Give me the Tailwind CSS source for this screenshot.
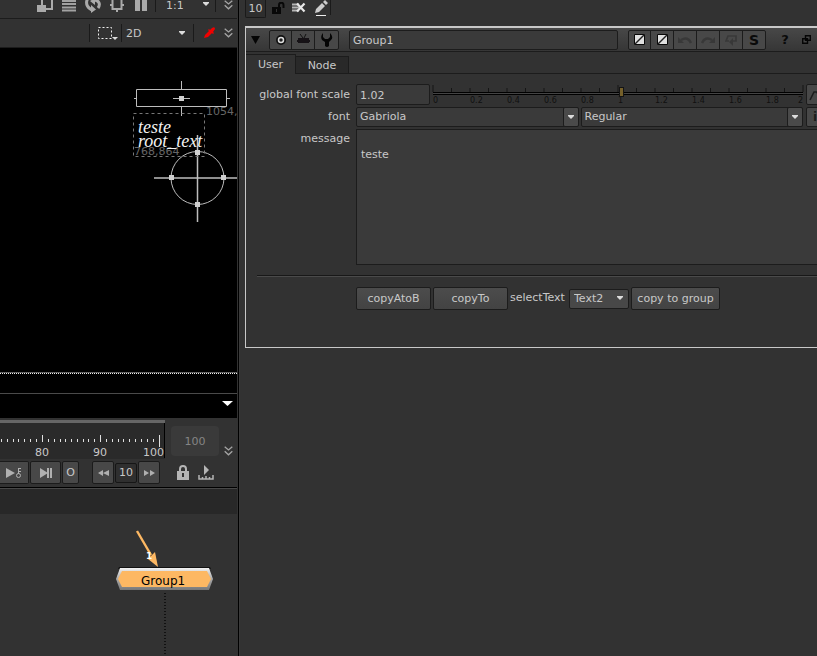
<!DOCTYPE html>
<html lang="en">
<head>
<meta charset="utf-8">
<meta name="viewport" content="width=device-width, initial-scale=1">
<title>Group1</title>
<script src="https://cdn.jsdelivr.net/npm/@tailwindcss/browser@4"></script>
</head>
<body class="flex h-screen overflow-hidden bg-[#323232] font-['DejaVu_Sans',Verdana,sans-serif] text-[11px] leading-4 text-[#c8c8c8]">
<svg class="hidden">
  <symbol id="chevrons" viewBox="0 0 9 10"><path d="M.7.8 4.5 4 8.3.8M.7 5.3 4.5 8.8 8.3 5.3" fill="none" stroke="#a5a5a5" stroke-width="1.3"/></symbol>
  <symbol id="caret" viewBox="0 0 6 4"><path d="M0 0h6v1L3 4 0 1z" fill="#dcdcdc"/></symbol>
</svg>

<!-- Viewer, timeline and node graph -->
<div class="flex w-[239px] shrink-0 flex-col border-r border-black">
  <div class="mr-px flex h-[19px] items-center overflow-hidden border-b border-[#1c1c1c] pl-[37px]">
    <div class="flex h-full gap-2">
      <button aria-label="Wipe" class="h-4 w-4"><svg width="16" height="16"><path d="M5 0v6M5 9h10V0" fill="none" stroke="#aaa" stroke-width="2"/><path d="M0 5h9v7H0z" fill="#aaa"/></svg></button>
      <button aria-label="Scanlines" class="h-4 w-4"><svg width="16" height="16"><path d="M1 1h14M1 4h14M1 7.500h14M1 10.500h14" stroke="#a2a2a2" stroke-width="2"/></svg></button>
      <button aria-label="Refresh" class="h-4 w-4"><svg width="16" height="16"><path d="M2.500-1C0 4 3 9 8 10M13 8C16 4 13.500 0 9 0" fill="none" stroke="#aaa" stroke-width="3"/><path d="m6 5 5 4.500-5 3.500zM10 5 5 1l5-3z" fill="#aaa"/></svg></button>
      <button aria-label="Region" class="h-4 w-4"><svg width="16" height="16"><path d="M3.500-1v10h9V-1M1 5h3M12 5h3M8 9v3" fill="none" stroke="#aaa" stroke-width="2"/></svg></button>
      <button aria-label="Pause" class="h-4 w-4"><svg width="16" height="16"><path d="M2 0h5v11H2zM9 0h5v11H9z" fill="#aaa"/></svg></button>
    </div>
    <div class="ml-1.5 h-3 w-px self-start bg-[#1a1a1a]"></div>
    <div class="relative w-[59px] self-start">
      <select aria-label="Zoom" class="-mt-[2px] block w-full appearance-none pl-2.5"><option>1:1</option></select>
      <svg class="pointer-events-none absolute right-1.5 top-[2px] h-1 w-1.5"><use href="#caret"/></svg>
    </div>
    <div class="h-3 w-px self-start bg-[#1a1a1a]"></div>
    <button aria-label="More" class="ml-2 self-start"><svg class="h-2.5 w-[9px]"><use href="#chevrons"/></svg></button>
  </div>
  <div class="mr-px flex h-[29px] items-center border-b border-[#1c1c1c] pl-[89px]">
    <div class="h-[18px] w-px bg-[#1a1a1a]"></div>
    <button aria-label="Selection" class="ml-2 w-[23px]"><svg width="20" height="14"><rect x=".5" y="1.500" width="13" height="11" fill="none" stroke="#eee" stroke-dasharray="2 2"/><path d="M14 11h6l-3 3z" fill="#ddd"/></svg></button>
    <div class="h-[18px] w-px bg-[#1a1a1a]"></div>
    <div class="relative w-[71px]">
      <select aria-label="View mode" class="block w-full appearance-none pl-1 pt-px"><option>2D</option></select>
      <svg class="pointer-events-none absolute right-2 top-1.5 h-1 w-1.5"><use href="#caret"/></svg>
    </div>
    <div class="h-[18px] w-px bg-[#1a1a1a]"></div>
    <button aria-label="Pick colour" class="ml-2.5"><svg width="12" height="12"><path d="m0 11 1-3 4-4-1-1 1-1 1 1 2-2q3-2 3 1L9 5l1 1-1 1-1-1-4 4z" fill="#f00000"/></svg></button>
    <button aria-label="More" class="ml-2"><svg class="h-2.5 w-[9px]"><use href="#chevrons"/></svg></button>
  </div>

  <div class="relative mr-px h-[345px] shrink-0 overflow-hidden bg-black">
    <svg class="absolute inset-0 h-full w-full" font-family="DejaVu Sans, sans-serif">
      <g fill="none" stroke="#bdbdbd">
        <path d="M136.500 41.500h90v17h-90zM181.500 33v9M181.500 58v10M173 50.500h17M134 50.500h3M227 50.500h3"/>
        <circle cx="197.500" cy="130" r="26.500"/>
        <path d="M197.500 87v87M154 130h84" stroke-width="1.500"/>
        <path d="M133.500 65.500h71v43h-71z" stroke="#777" stroke-dasharray="3 3"/>
      </g>
      <g fill="#d0d0d0"><path d="M179 48h5v5h-5zM195 102h5v5h-5zM195 154h5v5h-5zM169 127h5v5h-5zM221 127h5v5h-5z"/></g>
      <g fill="#666" font-size="11"><text x="206" y="67">1054,</text><text x="134" y="107">768,864</text></g>
      <g fill="#f2f2f2" font-family="Liberation Serif, serif" font-style="italic" font-size="18"><text x="138" y="85">teste</text><text x="138" y="99">root_text</text></g>
      <path d="M0 325.500h238" stroke="#f0f0f0" stroke-dasharray="1 1"/><path d="M0 324.500h238" stroke="#666"/>
    </svg>
  </div>
  <div class="mr-px flex h-[25px] shrink-0 items-start justify-end border-t border-[#4a4a4a] bg-black pr-1 pt-[7px]">
    <button aria-label="Show viewer options" class="leading-none"><svg width="11" height="6"><path d="M0 0h11L5.500 5z" fill="#fff"/></svg></button>
  </div>

  <div class="flex h-[41px] shrink-0 pt-[2px]">
    <div class="w-[165px] bg-[#2a2a2a]">
      <div class="h-[3px] bg-[#666]"></div>
      <svg class="block h-[35px] w-full border-r border-black" fill="#c8c8c8" font-size="11">
        <path d="M1.500 16v3M7.500 16v3M13.500 16v3M18.500 16v3M24.500 16v3M30.500 16v3M36.500 16v3M48.500 16v3M54.500 16v3M60.500 16v3M65.500 16v3M71.500 16v3M77.500 16v3M83.500 16v3M88.500 16v3M94.500 16v3M106.500 16v3M112.500 16v3M118.500 16v3M123.500 16v3M129.500 16v3M135.500 16v3M141.500 16v3M147.500 16v3M153.500 16v3M42.500 12v7M100.500 12v7M159.500 12v12" stroke="#e0e0e0"/>
        <text x="35" y="33">80</text><text x="93" y="33">90</text><text x="143" y="33">100</text>
      </svg>
    </div>
    <input aria-label="Last frame" value="100" class="ml-1.5 mt-1.5 h-[30px] w-12 rounded-sm bg-[#3a3a3a] text-center text-[#858585]">
    <button aria-label="More" class="ml-[5px] mt-[26px] h-2.5"><svg class="h-2.5 w-[9px]"><use href="#chevrons"/></svg></button>
  </div>
  <div class="flex h-[27px] shrink-0 items-center gap-px">
    <button aria-label="Next keyframe" class="flex h-[23px] w-[29px] items-center justify-center rounded-r-xs border border-l-0 border-[#1b1b1b] bg-[#484848]"><svg width="16" height="12" fill="#b0b0b0"><path d="m0 1 9 5-9 5z"/><circle cx="12.500" cy="8.500" r="2" fill="none" stroke="#b0b0b0"/><path d="M12 1h1v6h-1zM13 1h2v1h-2zM13 4h2v1h-2z"/></svg></button>
    <button aria-label="Last frame" class="flex h-[23px] w-[31px] items-center justify-center rounded-xs border border-[#1b1b1b] bg-[#484848]"><svg width="13" height="12" fill="#b0b0b0"><path d="m1 1 8 5-8 5zM8 1h2v10H8zM11 1h2v10h-2z"/></svg></button>
    <button class="h-[23px] w-[17px] rounded-xs border border-[#1b1b1b] bg-[#484848]">O</button>
    <button aria-label="Skip back" class="ml-3 flex h-[23px] w-[22px] items-center justify-center rounded-xs border border-[#1b1b1b] bg-[#484848]"><svg width="11" height="6" fill="#b0b0b0"><path d="M5 0v6L0 3zM11 0v6L5 3z"/></svg></button>
    <input aria-label="Skip frames" value="10" class="h-5 w-[22px] rounded-xs border border-[#161616] bg-[#2f2f2f] text-center">
    <button aria-label="Skip forward" class="flex h-[23px] w-[22px] items-center justify-center rounded-xs border border-[#1b1b1b] bg-[#484848]"><svg width="11" height="6" fill="#b0b0b0"><path d="M0 0v6l5-3zM6 0v6l5-3z"/></svg></button>
    <button aria-label="Lock range" class="ml-4"><svg width="12" height="15"><path d="M3 7V4a3 3 0 0 1 6 0v3" fill="none" stroke="#b5b5b5" stroke-width="2"/><path d="M0 6h12v9H0z" fill="#b5b5b5"/><path d="M5 8h2v4H5z" fill="#333"/></svg></button>
    <button aria-label="Playback range" class="ml-2"><svg width="16" height="15"><path d="m6 0 5 5-5 5z" fill="#b5b5b5"/><path d="M1 10v4h14v-4M4.500 12v2M8 11v3M11.500 12v2" fill="none" stroke="#b5b5b5" stroke-width="1.500"/></svg></button>
  </div>
  <div class="mr-px mt-px h-[27px] shrink-0 border-t border-black bg-[#282828]"><div class="h-px bg-[#484848]"></div></div>
  <div class="relative flex-1 overflow-hidden">
    <svg class="absolute inset-0 h-full w-full" font-family="DejaVu Sans, sans-serif">
      <defs><linearGradient id="bevel" x2="0" y2="1"><stop offset="0" stop-color="#f2f2f2"/><stop offset=".5" stop-color="#aaa"/><stop offset="1" stop-color="#777"/></linearGradient></defs>
      <path d="M165 79v70" stroke="#111" stroke-width="2" stroke-dasharray="1 2"/>
      <path d="M119 53h91l1 2H118z" fill="#111"/>
      <path d="M120 54h89l4 11-4 11h-89l-4-11z" fill="url(#bevel)"/>
      <path d="M122 57h85l4 8-4 8h-85l-4-8z" fill="#fdb863"/>
      <text x="141" y="71" font-size="12" fill="#000">Group1</text>
      <path d="m137 17 14 24" stroke="#fdb863" stroke-width="2.400"/>
      <path d="m148 45 7-7 3 15z" fill="#fdb863"/>
      <text x="146" y="45" font-size="9" font-weight="bold" fill="#fff">1</text>
    </svg>
  </div>
</div>

<!-- Properties -->
<div class="flex min-w-0 flex-1 flex-col overflow-hidden border-l border-[#3a3a3a] pl-[5px]">
  <div class="flex h-[26px] shrink-0 items-start">
    <input aria-label="Maximum panels" value="10" class="h-[18px] w-[21px] rounded-b-xs border border-t-0 border-[#1a1a1a] bg-[#2e2e2e] text-center">
    <button aria-label="Unlock panels" class="ml-1.5 mt-[2px]"><svg width="14" height="13"><path d="M0 5h9v7H0z" fill="#080808"/><path d="M7 6V3a2.200 2.200 0 0 1 4.500 0v3" fill="none" stroke="#080808" stroke-width="2"/><path d="M4 7h1v3H4z" fill="#333"/></svg></button>
    <button aria-label="Clear panels" class="ml-1.5 mt-[2px]"><svg width="14" height="12"><path d="M0 2.500h7M0 5.500h7M0 8.500h7" stroke="#b5b5b5" stroke-width="2"/><path d="m5 1.500 7.500 8M12.500 1.500 5 9.500" stroke="#e8e8e8" stroke-width="2.200"/></svg></button>
    <button aria-label="Edit" class="ml-2"><svg width="14" height="16"><path d="m1 13 1-4 6-6 3 3-6 6zM9 2l2-2 3 3-2 2z" fill="#ccc"/><path d="M2 15.500h10" stroke="#eee"/></svg></button>
    <div class="ml-[2px] h-[15px] w-px bg-[#1a1a1a]"></div>
  </div>

  <section class="-mr-4 h-[322px] shrink-0 border border-t-2 border-[#c8c8c8]">
    <header class="flex h-6 items-center border-b border-[#1c1c1c] bg-linear-to-b from-[#484848] to-[#363636] pl-[5px] pr-5">
      <button aria-label="Collapse"><svg width="9" height="8"><path d="M0 0h9L4.500 8z" fill="#050505"/></svg></button>
      <div class="ml-[9px] flex h-5 divide-x divide-[#1c1c1c] overflow-hidden rounded-xs border border-[#1c1c1c] bg-[#484848]">
        <button aria-label="Center node" class="flex w-[22px] items-center justify-center"><svg width="10" height="10"><circle cx="5" cy="5" r="5" fill="#111"/><circle cx="5" cy="5" r="2.500" fill="#222" stroke="#ddd" stroke-width="1.500"/></svg></button>
        <button aria-label="Input" class="flex w-[23px] items-center justify-center"><svg width="13" height="11"><path d="M1 4h11v5H1zM0 6h13v2H0z" fill="#161216"/><path d="M3 0l3 4M9 0 7 4" stroke="#111"/></svg></button>
        <button aria-label="Settings" class="flex w-[23px] items-center justify-center"><svg width="12" height="14"><path d="M2 0v4l2 2h3l2-2V0q4 4 1 7L8 9v4q-2 2-4 0V9L1 7Q-1 3 2 0z" fill="#050505"/></svg></button>
      </div>
      <input aria-label="Node name" value="Group1" class="ml-2.5 h-5 min-w-0 flex-1 rounded-xs border border-[#1c1c1c] bg-[#3a3a3a] px-[3px] pt-[2px]">
      <div class="ml-2.5 flex h-5 shrink-0 divide-x divide-[#1c1c1c] overflow-hidden rounded-xs border border-[#1c1c1c] bg-[#484848]">
        <button aria-label="Node colour" class="flex w-[22px] items-center justify-center"><svg width="11" height="11"><path d="M.5.500h10v10H.5z" fill="#e0e0e0" stroke="#080808"/><path d="m1 10 9-9" stroke="#222" stroke-width="1.500"/></svg></button>
        <button aria-label="Interface colour" class="flex w-[23px] items-center justify-center"><svg width="11" height="11"><path d="M.5.500h10v10H.5z" fill="#e0e0e0" stroke="#080808"/><path d="m1 10 9-9" stroke="#222" stroke-width="1.500"/></svg></button>
        <button aria-label="Undo" class="flex w-[23px] items-center justify-center"><svg width="14" height="8"><path d="M3 4q7-4 10 3" fill="none" stroke="#383838" stroke-width="2.500"/><path d="M0 1v6h6z" fill="#383838"/></svg></button>
        <button aria-label="Redo" class="flex w-[23px] items-center justify-center"><svg width="14" height="8"><path d="M11 4Q4 0 1 7" fill="none" stroke="#383838" stroke-width="2.500"/><path d="M14 1v6H8z" fill="#383838"/></svg></button>
        <button aria-label="Revert" class="flex w-[23px] items-center justify-center"><svg width="13" height="12"><path d="M4 7H1l2-5h8v5H8" fill="none" stroke="#383838" stroke-width="1.600"/><path d="M8 4v8L4 8z" fill="#383838"/></svg></button>
        <button aria-label="Save" class="w-[22px] text-[14px] font-bold text-[#0a0a0a]">S</button>
      </div>
      <button aria-label="Help" class="ml-3.5 w-2.5 shrink-0 text-[13px] font-bold text-[#0a0a0a]">?</button>
      <button aria-label="Float" class="ml-3 w-2.5 shrink-0"><svg width="9" height="9"><path d="M3.500.700h4.800v4.600H3.500zM.7 3.700h4.800v4.600H.7z" fill="#444" stroke="#050505" stroke-width="1.400"/></svg></button>
    </header>

    <nav class="flex h-[22px] items-end border-b border-[#1c1c1c]">
      <button class="-mb-px h-5 w-[50px] border-r border-t border-[#1c1c1c] bg-[#323232] pt-px">User</button>
      <button class="h-[17px] w-[53px] border-r border-t border-[#1c1c1c] bg-[#292929] pt-px">Node</button>
    </nav>

    <form class="flex flex-col gap-[2px] pl-[11px] pr-1 pt-2.5">
      <div class="flex items-center gap-1.5">
        <label for="scale" class="w-[93px] shrink-0 whitespace-nowrap pt-px text-right">global font scale</label>
        <input id="scale" value="1.02" class="h-[21px] w-[74px] rounded-xs border border-[#1c1c1c] bg-[#3a3a3a] px-[3px] pt-px">
        <div class="relative -ml-[3px] h-[21px] flex-1">
          <svg class="absolute inset-0 h-full w-full overflow-visible" fill="#101010" font-size="8">
            <g stroke="#151515">
              <line x1="0" x2="0" y1="1" y2="8"/><line x1="5%" x2="5%" y1="4" y2="8"/><line x1="10%" x2="10%" y1="4" y2="8"/><line x1="15%" x2="15%" y1="4" y2="8"/><line x1="20%" x2="20%" y1="4" y2="8"/><line x1="25%" x2="25%" y1="4" y2="8"/><line x1="30%" x2="30%" y1="4" y2="8"/><line x1="35%" x2="35%" y1="4" y2="8"/><line x1="40%" x2="40%" y1="4" y2="8"/><line x1="45%" x2="45%" y1="4" y2="8"/><line x1="50%" x2="50%" y1="1" y2="8"/><line x1="55%" x2="55%" y1="4" y2="8"/><line x1="60%" x2="60%" y1="4" y2="8"/><line x1="65%" x2="65%" y1="4" y2="8"/><line x1="70%" x2="70%" y1="4" y2="8"/><line x1="75%" x2="75%" y1="4" y2="8"/><line x1="80%" x2="80%" y1="4" y2="8"/><line x1="85%" x2="85%" y1="4" y2="8"/><line x1="90%" x2="90%" y1="4" y2="8"/><line x1="95%" x2="95%" y1="4" y2="8"/><line x1="100%" x2="100%" y1="1" y2="8"/>
            </g>
            <text x="0" y="19">0</text><text x="10%" y="19">0.2</text><text x="20%" y="19">0.4</text><text x="30%" y="19">0.6</text><text x="40%" y="19">0.8</text><text x="50%" y="19">1</text><text x="60%" y="19">1.2</text><text x="70%" y="19">1.4</text><text x="80%" y="19">1.6</text><text x="90%" y="19">1.8</text><text x="100%" y="19" text-anchor="end">2</text>
            <rect width="100%" height="3" y="8" fill="#000"/><rect width="100%" height="1" y="9" fill="#444"/>
          </svg>
          <input type="range" aria-label="global font scale slider" min="0" max="2" step="0.01" value="1.02" class="absolute left-0 top-[3px] h-[10px] w-full appearance-none bg-transparent [&::-webkit-slider-thumb]:h-[10px] [&::-webkit-slider-thumb]:w-[5px] [&::-webkit-slider-thumb]:appearance-none [&::-webkit-slider-thumb]:border [&::-webkit-slider-thumb]:border-[#141414] [&::-webkit-slider-thumb]:bg-[#75602a]">
        </div>
        <button type="button" aria-label="Animation" class="-ml-[3px] flex h-[21px] w-[22px] items-center rounded-xs border border-[#1c1c1c] bg-[#484848] pl-[2px]"><svg width="16" height="12"><path d="m1 11 4-8 3 0 3 8 4-3" fill="none" stroke="#1c1c1c" stroke-width="1.600"/></svg></button>
      </div>
      <div class="flex items-center">
        <label for="font" class="mr-1.5 w-[93px] shrink-0 text-right">font</label>
        <div class="relative h-5 flex-1">
          <select id="font" class="h-full w-full appearance-none rounded-xs border border-[#1c1c1c] bg-[#3a3a3a] px-[3px]"><option>Gabriola</option></select>
          <span class="pointer-events-none absolute right-0 top-0 flex h-full w-4 items-center justify-center rounded-xs border border-[#1c1c1c] bg-[#4a4a4a]"><svg class="h-1 w-1.5"><use href="#caret"/></svg></span>
        </div>
        <div class="relative ml-[2px] h-5 flex-1">
          <select aria-label="font style" class="h-full w-full appearance-none rounded-xs border border-[#1c1c1c] bg-[#3a3a3a] px-[3px]"><option>Regular</option></select>
          <span class="pointer-events-none absolute right-0 top-0 flex h-full w-4 items-center justify-center rounded-xs border border-[#1c1c1c] bg-[#4a4a4a]"><svg class="h-1 w-1.5"><use href="#caret"/></svg></span>
        </div>
        <button type="button" aria-label="Font info" class="ml-[3px] h-5 w-[22px] rounded-xs border border-[#1c1c1c] bg-[#484848] pl-1.5 text-left text-[12px] font-bold text-[#1c1c1c]">i</button>
      </div>
      <div class="flex gap-1.5">
        <label for="message" class="w-[93px] shrink-0 pt-[2px] text-right">message</label>
        <textarea id="message" class="h-[136px] flex-1 resize-none border border-[#1c1c1c] bg-[#3a3a3a] px-1 pt-[1px] leading-4"></textarea>
      </div>
      <hr class="mt-2 h-[2px] border-b border-t border-b-[#4a4a4a] border-t-[#181818]">
      <div class="mt-2 flex h-[23px] items-center gap-[2px] pl-[99px]">
        <button type="button" class="h-[23px] w-[75px] rounded-xs border border-[#1c1c1c] bg-linear-to-b from-[#4c4c4c] to-[#434343]">copyAtoB</button>
        <button type="button" class="h-[23px] w-[75px] rounded-xs border border-[#1c1c1c] bg-linear-to-b from-[#4c4c4c] to-[#434343]">copyTo</button>
        <label for="selectText" class="-mt-[2px] w-[57px]">selectText</label>
        <div class="relative">
          <select id="selectText" class="block h-5 w-[60px] appearance-none rounded-xs border border-[#1c1c1c] bg-[#484848] px-1"><option>Text2</option></select>
          <svg class="pointer-events-none absolute right-1.5 top-[7px] h-1 w-1.5"><use href="#caret"/></svg>
        </div>
        <button type="button" class="h-[23px] w-[89px] whitespace-nowrap rounded-xs border border-[#1c1c1c] bg-linear-to-b from-[#4c4c4c] to-[#434343]">copy to group</button>
      </div>
    </form>
  </section>
</div>
<script>document.getElementById('message').value = '\nteste';</script>
</body>
</html>
